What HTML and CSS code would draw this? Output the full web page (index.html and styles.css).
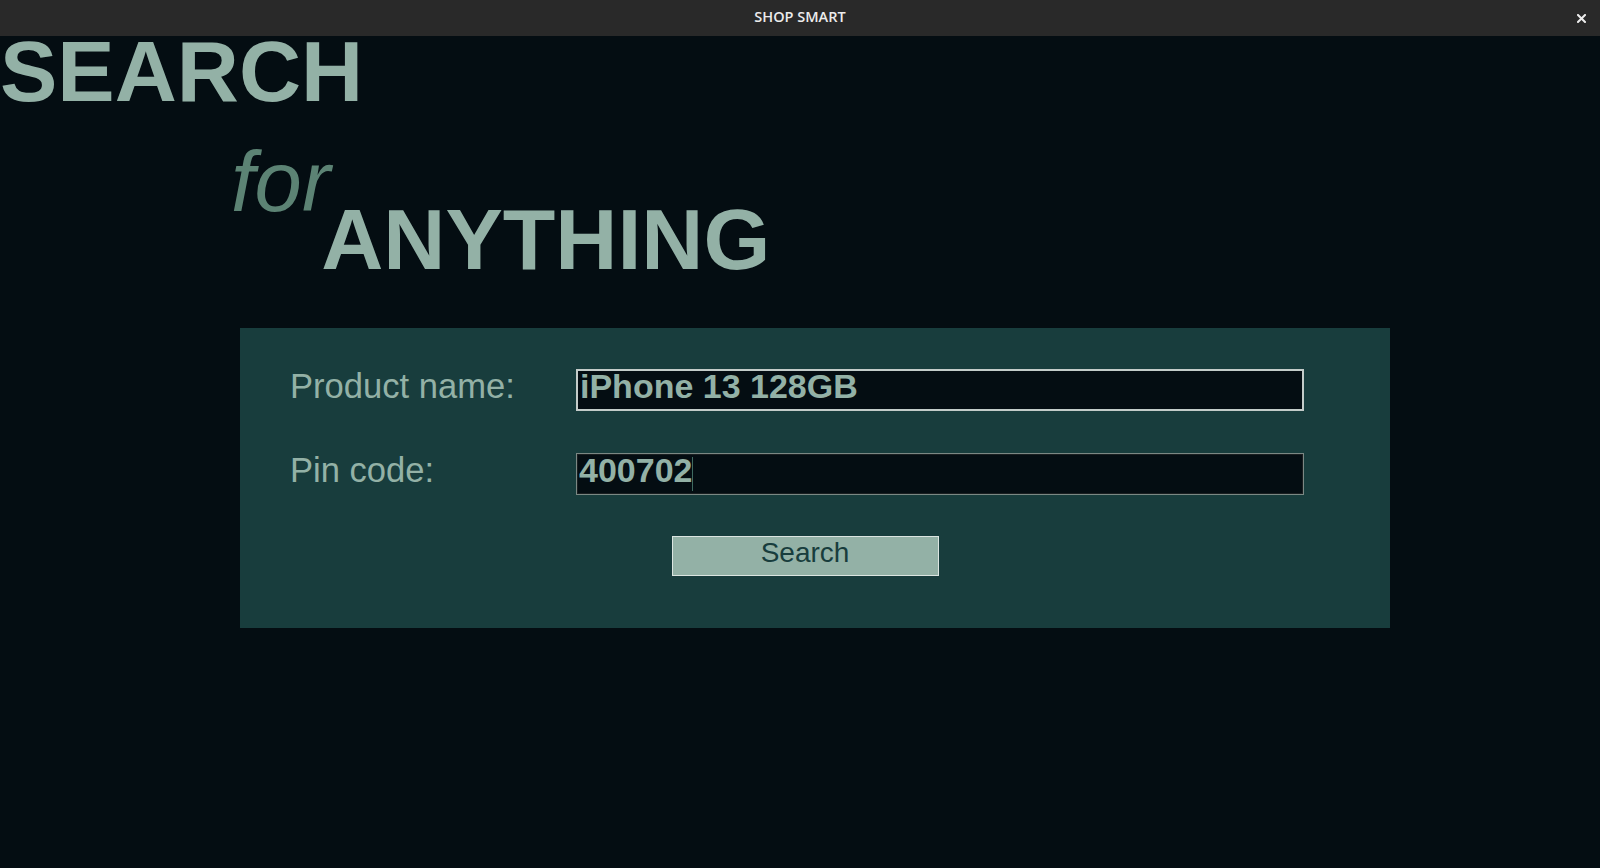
FILE: index.html
```html
<!DOCTYPE html>
<html lang="en">
<head>
<meta charset="utf-8">
<title>SHOP SMART</title>
<link rel="stylesheet" href="styles.css">
</head>
<body>
<header class="titlebar">
  <span class="titlebar-spacer"></span>
  <span class="titlebar-title">SHOP SMART</span>
  <button class="titlebar-close" type="button" aria-label="Close">
    <svg width="9" height="9" viewBox="0 0 9 9"><path d="M1 1 L8 8 M8 1 L1 8" stroke="#ececec" stroke-width="2" stroke-linecap="square"/></svg>
  </button>
</header>
<main class="page">
  <h1 class="hero">
    <span class="hero-search">SEARCH</span>
    <span class="hero-line2">
      <span class="hero-for">for</span>
      <span class="hero-anything">ANYTHING</span>
    </span>
  </h1>
  <form class="panel" onsubmit="return false;">
    <div class="row">
      <label class="row-label" for="product">Product name:</label>
      <input class="field field-hover" id="product" type="text" value="iPhone 13 128GB">
    </div>
    <div class="row row-gap">
      <label class="row-label" for="pin">Pin code:</label>
      <span class="field-wrap">
        <input class="field field-focus" id="pin" type="text" value="400702">
        <span class="fake-caret"></span>
      </span>
    </div>
    <div class="actions">
      <button class="search-btn" type="submit">Search</button>
    </div>
  </form>
</main>
</body>
</html>
```
FILE: styles.css
```css
* { box-sizing: border-box; }
html, body { margin: 0; padding: 0; }
body {
  background: #040D12;
  width: 1600px;
  height: 868px;
  overflow: hidden;
  font-family: "Liberation Sans", Arial, sans-serif;
}
.titlebar {
  height: 36px;
  background: #292929;
  display: grid;
  grid-template-columns: 1fr auto 1fr;
  align-items: center;
}
.titlebar-title {
  font-family: "Open Sans", "Liberation Sans", sans-serif;
  font-weight: 600;
  font-size: 14.5px;
  line-height: 20px;
  margin-top: -2px;
  color: #ececec;
}
.titlebar-close {
  justify-self: end;
  margin-right: 14px;
  background: none;
  border: 0;
  padding: 0;
  width: 9px;
  height: 9px;
  display: flex;
}
.page { display: block; }
.hero {
  margin: 0;
  font-weight: normal;
}
.hero-search {
  display: block;
  font-weight: bold;
  font-size: 86px;
  line-height: 70px;
  color: #93B1A6;
}
.hero-line2 {
  display: flex;
  align-items: flex-start;
  margin-top: 32px;
  padding-left: 231px;
}
.hero-for {
  font-style: italic;
  font-weight: normal;
  font-size: 85px;
  line-height: 88px;
  color: #5C8374;
}
.hero-anything {
  font-weight: bold;
  font-size: 86px;
  line-height: 86px;
  margin-top: 58px;
  margin-left: -9px;
  color: #93B1A6;
}
.panel {
  margin: 46px 0 0 240px;
  width: 1150px;
  height: 300px;
  padding: 41px 70px 0 50px;
  background: #183D3D;
}
.row {
  display: flex;
  align-items: baseline;
}
.row-gap { margin-top: 42px; }
.row-label {
  width: 286px;
  flex: none;
  font-size: 34.6px;
  line-height: 34px;
  color: #93B1A6;
}
.field-wrap {
  position: relative;
  display: inline-flex;
}
.field {
  width: 728px;
  height: 42px;
  padding: 0 2px 7px 2px;
  background: #040D12;
  color: #93B1A6;
  font-family: "Liberation Sans", Arial, sans-serif;
  font-weight: bold;
  font-size: 34px;
  outline: none;
}
.field-hover {
  border: 2px solid #c3ccc9;
}
.field-focus {
  border: 1px solid #7b8884;
  box-shadow: inset 0 0 0 1px #1a1f21;
}
.fake-caret {
  position: absolute;
  left: 116px;
  top: 4px;
  width: 1px;
  height: 34px;
  background: #3f6a60;
}
.actions {
  display: flex;
  justify-content: center;
  margin-top: 41px;
}
.search-btn {
  width: 267px;
  height: 40px;
  padding: 0 0 6px;
  background: #93B1A6;
  border: 1px solid #dbe5e1;
  color: #183D3D;
  font-family: "Liberation Sans", Arial, sans-serif;
  font-size: 28px;
}
```
